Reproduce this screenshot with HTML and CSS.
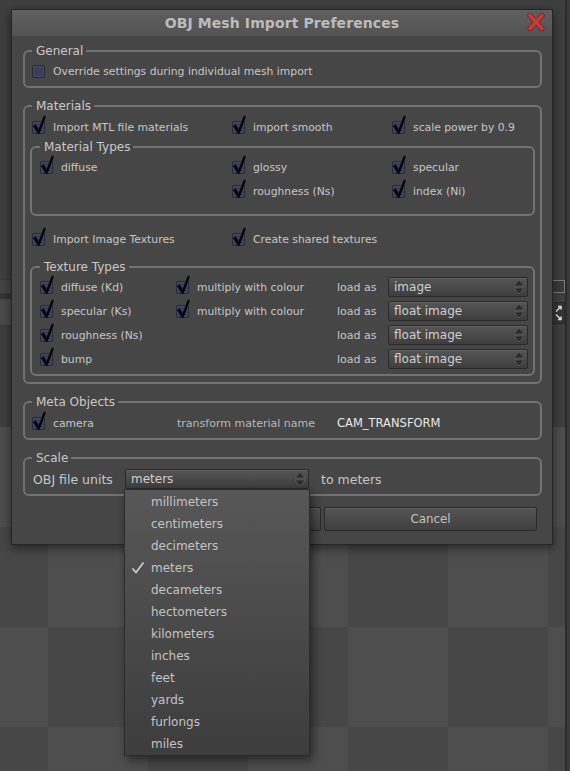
FILE: index.html
```html
<!DOCTYPE html>
<html>
<head>
<meta charset="utf-8">
<title>OBJ Mesh Import Preferences</title>
<link rel="stylesheet" href="styles.css">
</head>
<body>
<div class="desk">
  <div class="checker"></div>
  <div class="lpanel"></div>
  <div class="vline"></div>
  <div class="side-box"></div>
  <div class="side-btn">
    <svg viewBox="0 0 11 20" width="11" height="20"><path d="M3 8.5 L8 3.5 M5 3.5 H8 V6.5 M3 11.5 L8 16.5 M8 13.5 V16.5 H5" fill="none" stroke="#e2e2e2" stroke-width="1.5"/></svg>
  </div>

  <div class="dialog">
    <div class="titlebar">
      <span class="title">OBJ Mesh Import Preferences</span>
      <svg class="close" viewBox="0 0 18 20" width="18" height="20"><path d="M3 3.5 L15 16.5 M15 3.5 L3 16.5" stroke="#7a2426" stroke-width="5.2" stroke-linecap="round"/><path d="M3 3.5 L15 16.5 M15 3.5 L3 16.5" stroke="#c8393c" stroke-width="3.6" stroke-linecap="round"/></svg>
    </div>
    <div class="body">
      <fieldset class="grp g-general">
        <legend>General</legend>
        <div class="row">
          <label class="item"><span class="cb"></span>Override settings during individual mesh import</label>
        </div>
      </fieldset>

      <fieldset class="grp g-mat">
        <legend>Materials</legend>
        <div class="row cols3">
          <label class="item"><span class="cb on"><svg viewBox="0 0 16 20"><path d="M2 11 L4.6 9.3 L7.6 14.3 L12.8 0.4 L15 1.5 L8.6 18.8 L6.8 18.8 Z"/></svg></span>Import MTL file materials</label>
          <label class="item"><span class="cb on"><svg viewBox="0 0 16 20"><path d="M2 11 L4.6 9.3 L7.6 14.3 L12.8 0.4 L15 1.5 L8.6 18.8 L6.8 18.8 Z"/></svg></span>import smooth</label>
          <label class="item"><span class="cb on"><svg viewBox="0 0 16 20"><path d="M2 11 L4.6 9.3 L7.6 14.3 L12.8 0.4 L15 1.5 L8.6 18.8 L6.8 18.8 Z"/></svg></span>scale power by 0.9</label>
        </div>

        <fieldset class="grp inner g-types">
          <legend>Material Types</legend>
          <div class="row icols3">
            <label class="item"><span class="cb on"><svg viewBox="0 0 16 20"><path d="M2 11 L4.6 9.3 L7.6 14.3 L12.8 0.4 L15 1.5 L8.6 18.8 L6.8 18.8 Z"/></svg></span>diffuse</label>
            <label class="item"><span class="cb on"><svg viewBox="0 0 16 20"><path d="M2 11 L4.6 9.3 L7.6 14.3 L12.8 0.4 L15 1.5 L8.6 18.8 L6.8 18.8 Z"/></svg></span>glossy</label>
            <label class="item"><span class="cb on"><svg viewBox="0 0 16 20"><path d="M2 11 L4.6 9.3 L7.6 14.3 L12.8 0.4 L15 1.5 L8.6 18.8 L6.8 18.8 Z"/></svg></span>specular</label>
          </div>
          <div class="row icols3">
            <span></span>
            <label class="item"><span class="cb on"><svg viewBox="0 0 16 20"><path d="M2 11 L4.6 9.3 L7.6 14.3 L12.8 0.4 L15 1.5 L8.6 18.8 L6.8 18.8 Z"/></svg></span>roughness (Ns)</label>
            <label class="item"><span class="cb on"><svg viewBox="0 0 16 20"><path d="M2 11 L4.6 9.3 L7.6 14.3 L12.8 0.4 L15 1.5 L8.6 18.8 L6.8 18.8 Z"/></svg></span>index (Ni)</label>
          </div>
        </fieldset>

        <div class="row cols2 r-tex">
          <label class="item"><span class="cb on"><svg viewBox="0 0 16 20"><path d="M2 11 L4.6 9.3 L7.6 14.3 L12.8 0.4 L15 1.5 L8.6 18.8 L6.8 18.8 Z"/></svg></span>Import Image Textures</label>
          <label class="item"><span class="cb on"><svg viewBox="0 0 16 20"><path d="M2 11 L4.6 9.3 L7.6 14.3 L12.8 0.4 L15 1.5 L8.6 18.8 L6.8 18.8 Z"/></svg></span>Create shared textures</label>
        </div>

        <fieldset class="grp inner g-tex">
          <legend>Texture Types</legend>
          <div class="row trow">
            <label class="item"><span class="cb on"><svg viewBox="0 0 16 20"><path d="M2 11 L4.6 9.3 L7.6 14.3 L12.8 0.4 L15 1.5 L8.6 18.8 L6.8 18.8 Z"/></svg></span>diffuse (Kd)</label>
            <label class="item"><span class="cb on"><svg viewBox="0 0 16 20"><path d="M2 11 L4.6 9.3 L7.6 14.3 L12.8 0.4 L15 1.5 L8.6 18.8 L6.8 18.8 Z"/></svg></span>multiply with colour</label>
            <span class="loadas">load as</span>
            <div class="select">image<svg class="arr" viewBox="0 0 12 16"><path d="M6 1 L11 7 L1 7 Z M1 9 L11 9 L6 15 Z"/></svg></div>
          </div>
          <div class="row trow">
            <label class="item"><span class="cb on"><svg viewBox="0 0 16 20"><path d="M2 11 L4.6 9.3 L7.6 14.3 L12.8 0.4 L15 1.5 L8.6 18.8 L6.8 18.8 Z"/></svg></span>specular (Ks)</label>
            <label class="item"><span class="cb on"><svg viewBox="0 0 16 20"><path d="M2 11 L4.6 9.3 L7.6 14.3 L12.8 0.4 L15 1.5 L8.6 18.8 L6.8 18.8 Z"/></svg></span>multiply with colour</label>
            <span class="loadas">load as</span>
            <div class="select">float image<svg class="arr" viewBox="0 0 12 16"><path d="M6 1 L11 7 L1 7 Z M1 9 L11 9 L6 15 Z"/></svg></div>
          </div>
          <div class="row trow">
            <label class="item"><span class="cb on"><svg viewBox="0 0 16 20"><path d="M2 11 L4.6 9.3 L7.6 14.3 L12.8 0.4 L15 1.5 L8.6 18.8 L6.8 18.8 Z"/></svg></span>roughness (Ns)</label>
            <span></span>
            <span class="loadas">load as</span>
            <div class="select">float image<svg class="arr" viewBox="0 0 12 16"><path d="M6 1 L11 7 L1 7 Z M1 9 L11 9 L6 15 Z"/></svg></div>
          </div>
          <div class="row trow">
            <label class="item"><span class="cb on"><svg viewBox="0 0 16 20"><path d="M2 11 L4.6 9.3 L7.6 14.3 L12.8 0.4 L15 1.5 L8.6 18.8 L6.8 18.8 Z"/></svg></span>bump</label>
            <span></span>
            <span class="loadas">load as</span>
            <div class="select">float image<svg class="arr" viewBox="0 0 12 16"><path d="M6 1 L11 7 L1 7 Z M1 9 L11 9 L6 15 Z"/></svg></div>
          </div>
        </fieldset>
      </fieldset>

      <fieldset class="grp g-meta">
        <legend>Meta Objects</legend>
        <div class="row mrow">
          <label class="item"><span class="cb on"><svg viewBox="0 0 16 20"><path d="M2 11 L4.6 9.3 L7.6 14.3 L12.8 0.4 L15 1.5 L8.6 18.8 L6.8 18.8 Z"/></svg></span>camera</label>
          <span class="tname">transform material name</span>
          <span class="tval">CAM_TRANSFORM</span>
        </div>
      </fieldset>

      <fieldset class="grp g-scale">
        <legend>Scale</legend>
        <div class="row srow">
          <span class="slabel">OBJ file units</span>
          <div class="select">meters<svg class="arr" viewBox="0 0 12 16"><path d="M6 1 L11 7 L1 7 Z M1 9 L11 9 L6 15 Z"/></svg></div>
          <span class="slabel tometers">to meters</span>
        </div>
      </fieldset>

      <div class="buttons">
        <div class="btn ok">OK</div>
        <div class="btn cancel">Cancel</div>
      </div>
    </div>
  </div>

  <div class="droplist">
    <div class="opt">millimeters</div>
    <div class="opt">centimeters</div>
    <div class="opt">decimeters</div>
    <div class="opt sel"><svg class="tick" viewBox="0 0 14 14"><path d="M1.5 7.5 L5 11.5 L12.5 1.5" fill="none" stroke="#cfcfcf" stroke-width="1.7"/></svg>meters</div>
    <div class="opt">decameters</div>
    <div class="opt">hectometers</div>
    <div class="opt">kilometers</div>
    <div class="opt">inches</div>
    <div class="opt">feet</div>
    <div class="opt">yards</div>
    <div class="opt">furlongs</div>
    <div class="opt">miles</div>
  </div>
</div>
</body>
</html>
```

FILE: styles.css
```css
* { box-sizing: border-box; }
html, body { margin: 0; padding: 0; }
body {
  width: 570px;
  height: 771px;
  overflow: hidden;
  background: #3d3d3d;
  font-family: "DejaVu Sans", Verdana, sans-serif;
}
.desk {
  position: relative;
  width: 570px;
  height: 771px;
  overflow: hidden;
  background: #3f3f3f;
}
.checker {
  position: absolute;
  left: 0; right: 0; top: 427px; bottom: 0;
  background: conic-gradient(#4e4e4e 0 25%, #474747 0 50%, #4e4e4e 0 75%, #474747 0) 48px 0 / 200px 200px;
}
.lpanel {
  position: absolute;
  left: 0; top: 279px; width: 11px; height: 47px;
  border-top: 1px solid #363636;
  border-bottom: 1px solid #363636;
  background: linear-gradient(#444 0 13px, #353535 13px 19px, #4b4b4b 19px);
}
.vline {
  position: absolute;
  left: 565px; top: 0; bottom: 0; width: 5px;
  border-left: 2px solid #2c2c2c;
  background: #3b3b3b;
}
.side-box {
  position: absolute;
  left: 552px; top: 280px; width: 13px; height: 13px;
  border: 1px solid #7b7b7b;
  background: #3b3b3b;
}
.side-btn {
  position: absolute;
  left: 552px; top: 302px; width: 13px; height: 22px;
  background: #353535;
  border: 1px solid #2a2a2a;
  display: flex; align-items: center; justify-content: center;
}

/* dialog */
.dialog {
  position: absolute;
  left: 11px; top: 9px;
  width: 542px; height: 536px;
  background: #464646;
  border: 1px solid #262626;
  box-shadow: 0 3px 10px rgba(0,0,0,.5);
  display: flex; flex-direction: column;
}
.titlebar {
  position: relative;
  height: 26px; flex: none;
  background: linear-gradient(#5f5f5f, #535353);
  display: flex; align-items: center; justify-content: center;
}
.title {
  font-weight: bold;
  font-size: 14px;
  color: #bcbcbc;
  letter-spacing: 0.1px;
}
.close {
  position: absolute;
  right: 7px; top: 2px;
}
.body {
  padding: 8px 10px 0 11px;
}

.grp {
  margin: 0;
  padding: 1px 7px 3px 7px;
  border: 2px solid #727272;
  border-radius: 6px;
  min-width: 0;
}
.grp legend {
  padding: 0 3px 0 4px;
  font-size: 12px;
  line-height: 14px;
  color: #c9c9c9;
}
.grp.inner {
  margin: 0 -2px;
  padding: 1px 8px 3px 8px;
}
.grp.g-mat { margin-top: 11px; padding-top: 2px; padding-bottom: 6px; }
.grp.inner.g-types { margin-top: 1px; padding-bottom: 11px; }
.row.r-tex { margin-top: 11px; }
.grp.inner.g-tex { margin-top: 9px; }
.grp.g-meta { margin-top: 11px; padding-top: 2px; }
.grp.g-scale { margin-top: 11px; padding-top: 2px; }

.row {
  height: 24px;
  display: flex;
  align-items: center;
}
.cols3 { display: grid; grid-template-columns: 200px 160px 1fr; align-items: center; }
.icols3 { display: grid; grid-template-columns: 192px 160px 1fr; align-items: center; }
.cols2 { display: grid; grid-template-columns: 200px 1fr; align-items: center; }
.trow { display: grid; grid-template-columns: 136px 161px 51px 140px; align-items: center; }
.mrow { display: grid; grid-template-columns: 145px 160px 1fr; align-items: center; }
.srow { display: grid; grid-template-columns: 93px 184px 1fr; align-items: center; }

.item {
  display: flex;
  align-items: center;
  gap: 8px;
  font-size: 10.8px;
  color: #c6c6c6;
  white-space: nowrap;
}
.cb {
  position: relative;
  width: 13px; height: 13px;
  flex: none;
  background: #3d3d5a;
  border: 1px solid #27273a;
  border-radius: 2px;
  box-shadow: inset 0 0 0 1px rgba(110,110,150,.25);
}
.cb svg {
  position: absolute;
  left: -2px; top: -7px;
  width: 16px; height: 20px;
  fill: #080808;
}

.loadas {
  font-size: 11px;
  color: #c6c6c6;
  white-space: nowrap;
}
.select {
  position: relative;
  height: 20px;
  border: 1px solid #2a2a2a;
  border-radius: 2px;
  background: linear-gradient(#555555, #3e3e3e);
  box-shadow: inset 0 1px 0 rgba(255,255,255,.07);
  padding-left: 5px;
  font-size: 12px;
  line-height: 18px;
  color: #cfcfcf;
  white-space: nowrap;
}
.select .arr {
  position: absolute;
  right: 2px; top: 1px;
  width: 12px; height: 16px;
  fill: #2b2b2b;
  stroke: #5e5e5e;
  stroke-width: 0.7;
}

.tname {
  font-size: 11px;
  color: #b9b9b9;
  white-space: nowrap;
}
.tval {
  font-size: 11.5px;
  color: #e8e8e8;
  white-space: nowrap;
}
.slabel {
  font-size: 12.5px;
  color: #c6c6c6;
  white-space: nowrap;
  padding-left: 1px;
}
.tometers { padding-left: 12px; }

.buttons {
  display: flex;
  justify-content: flex-end;
  gap: 3px;
  margin-top: 11px;
  padding-right: 5px;
}
.btn {
  height: 24px;
  border: 1px solid #2a2a2a;
  border-radius: 2px;
  background: linear-gradient(#545454, #404040);
  box-shadow: inset 0 1px 0 rgba(255,255,255,.06);
  color: #c2c2c2;
  font-size: 11.8px;
  display: flex; align-items: center; justify-content: center;
}
.ok { width: 195px; }
.cancel { width: 213px; }

/* popup list */
.droplist {
  position: absolute;
  left: 124px; top: 489px;
  width: 186px; height: 267px;
  border: 1px solid #2c2c2c;
  background: linear-gradient(#575757, #3d3d3d);
  box-shadow: 3px 4px 10px rgba(0,0,0,.5);
  padding-top: 1px;
}
.opt {
  position: relative;
  height: 22px;
  line-height: 22px;
  padding-left: 26px;
  font-size: 12px;
  color: #c4c4c4;
  white-space: nowrap;
}
.opt .tick {
  position: absolute;
  left: 6px; top: 4px;
  width: 14px; height: 14px;
}
```
